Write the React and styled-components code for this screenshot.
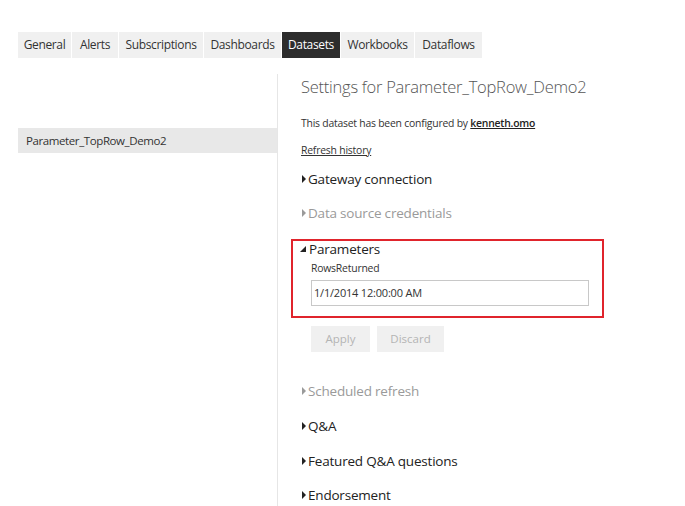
import styled, { createGlobalStyle } from 'styled-components'

const GlobalStyle = createGlobalStyle`
  body {
    margin: 0;
    background: #fff;
    font-family: "Open Sans", "Noto Sans", sans-serif;
    color: #333;
  }
`

const Page = styled.div`
  width: 685px;
  height: 506px;
  overflow: hidden;
  padding-top: 32px;
  box-sizing: border-box;
`

const Tabs = styled.div`
  display: flex;
  gap: 1px;
  margin-left: 18px;
`

const Tab = styled.div`
  width: ${(p) => p.$w}px;
  height: 26px;
  line-height: 26px;
  text-align: center;
  font-size: 12px;
  letter-spacing: -0.35px;
  background: ${(p) => (p.$active ? '#2d2d2d' : '#f0f0f0')};
  color: ${(p) => (p.$active ? '#fff' : '#333')};
`

const Body = styled.div`
  display: flex;
  margin-top: 16px;
  height: 100%;
`

const Sidebar = styled.div`
  width: 259px;
  margin-left: 18px;
  border-right: 1px solid #e6e6e6;
  padding-top: 54px;
`

const SideItem = styled.div`
  height: 25px;
  line-height: 25px;
  padding-left: 8px;
  font-size: 11.5px;
  letter-spacing: -0.4px;
  background: #e8e8e8;
  color: #333;
`

const Main = styled.div`
  flex: 1;
  padding-left: 23px;
  padding-top: 2px;
`

const Title = styled.div`
  font-size: 16.5px;
  font-weight: 300;
  color: #555;
  line-height: 22px;
  letter-spacing: -0.25px;
`

const Note = styled.div`
  font-size: 10.4px;
  letter-spacing: -0.22px;
  color: #333;
  margin-top: ${(p) => p.$top}px;
  line-height: 14px;

  a {
    color: #222;
    font-weight: 600;
    text-decoration: underline;
  }
`

const HistoryLink = styled.a`
  display: inline-block;
  font-size: 10.4px;
  letter-spacing: -0.2px;
  color: #333;
  text-decoration: underline;
  margin-top: 13px;
  line-height: 14px;
`

const Section = styled.div`
  display: flex;
  align-items: center;
  font-size: 13.5px;
  letter-spacing: -0.2px;
  line-height: 18px;
  margin-top: ${(p) => p.$top}px;
  color: ${(p) => (p.$muted ? '#9a9a9a' : '#222')};
`

const Arrow = styled.span`
  display: inline-block;
  width: 0;
  height: 0;
  margin: 0 2px 0 1px;
  border-top: 4.5px solid transparent;
  border-bottom: 4.5px solid transparent;
  border-left: 4.5px solid ${(p) => (p.$muted ? '#9a9a9a' : '#222')};
`

const OpenArrow = styled.span`
  display: inline-block;
  width: 0;
  height: 0;
  margin: 0 3px 0 0;
  border-left: 6px solid transparent;
  border-bottom: 6px solid #222;
`

const Highlight = styled.div`
  width: 313px;
  height: 79px;
  margin: 17px 0 0 -10px;
  border: 2px solid #e0242c;
  box-sizing: border-box;
  padding: 0 0 0 7px;

  & > ${Section} {
    line-height: 14px;
  }
`

const ParamLabel = styled.div`
  font-size: 10.4px;
  letter-spacing: -0.2px;
  color: #333;
  margin: 5px 0 0 11px;
  line-height: 14px;
`

const Input = styled.div`
  width: 278px;
  height: 26px;
  box-sizing: border-box;
  margin: 5px 0 0 11px;
  border: 1px solid #c8c8c8;
  padding-left: 2px;
  font-size: 11px;
  letter-spacing: -0.2px;
  line-height: 24px;
  color: #333;
`

const Actions = styled.div`
  display: flex;
  gap: 7px;
  margin: 8px 0 0 10px;
`

const Button = styled.div`
  width: ${(p) => p.$w}px;
  height: 26px;
  line-height: 26px;
  text-align: center;
  background: #f0f0f0;
  color: #b4b4b4;
  font-size: 11.5px;
`

const tabs = [
  ['General', 53],
  ['Alerts', 46],
  ['Subscriptions', 84],
  ['Dashboards', 77],
  ['Datasets', 58],
  ['Workbooks', 73],
  ['Dataflows', 67],
]

export default function App() {
  return (
    <Page>
      <GlobalStyle />
      <Tabs>
        {tabs.map(([name, w]) => (
          <Tab key={name} $w={w} $active={name === 'Datasets'}>
            {name}
          </Tab>
        ))}
      </Tabs>
      <Body>
        <Sidebar>
          <SideItem>Parameter_TopRow_Demo2</SideItem>
        </Sidebar>
        <Main>
          <Title>Settings for Parameter_TopRow_Demo2</Title>
          <Note $top={18}>
            This dataset has been configured by <a>kenneth.omo</a>
          </Note>
          <HistoryLink>Refresh history</HistoryLink>
          <Section $top={11}>
            <Arrow />
            Gateway connection
          </Section>
          <Section $top={16} $muted>
            <Arrow $muted />
            Data source credentials
          </Section>
          <Highlight>
            <Section $top={1}>
              <OpenArrow />
              Parameters
            </Section>
            <ParamLabel>RowsReturned</ParamLabel>
            <Input>1/1/2014 12:00:00 AM</Input>
          </Highlight>
          <Actions>
            <Button $w={59}>Apply</Button>
            <Button $w={67}>Discard</Button>
          </Actions>
          <Section $top={30} $muted>
            <Arrow $muted />
            Scheduled refresh
          </Section>
          <Section $top={17}>
            <Arrow />
            Q&amp;A
          </Section>
          <Section $top={17}>
            <Arrow />
            Featured Q&amp;A questions
          </Section>
          <Section $top={16}>
            <Arrow />
            Endorsement
          </Section>
        </Main>
      </Body>
    </Page>
  )
}
